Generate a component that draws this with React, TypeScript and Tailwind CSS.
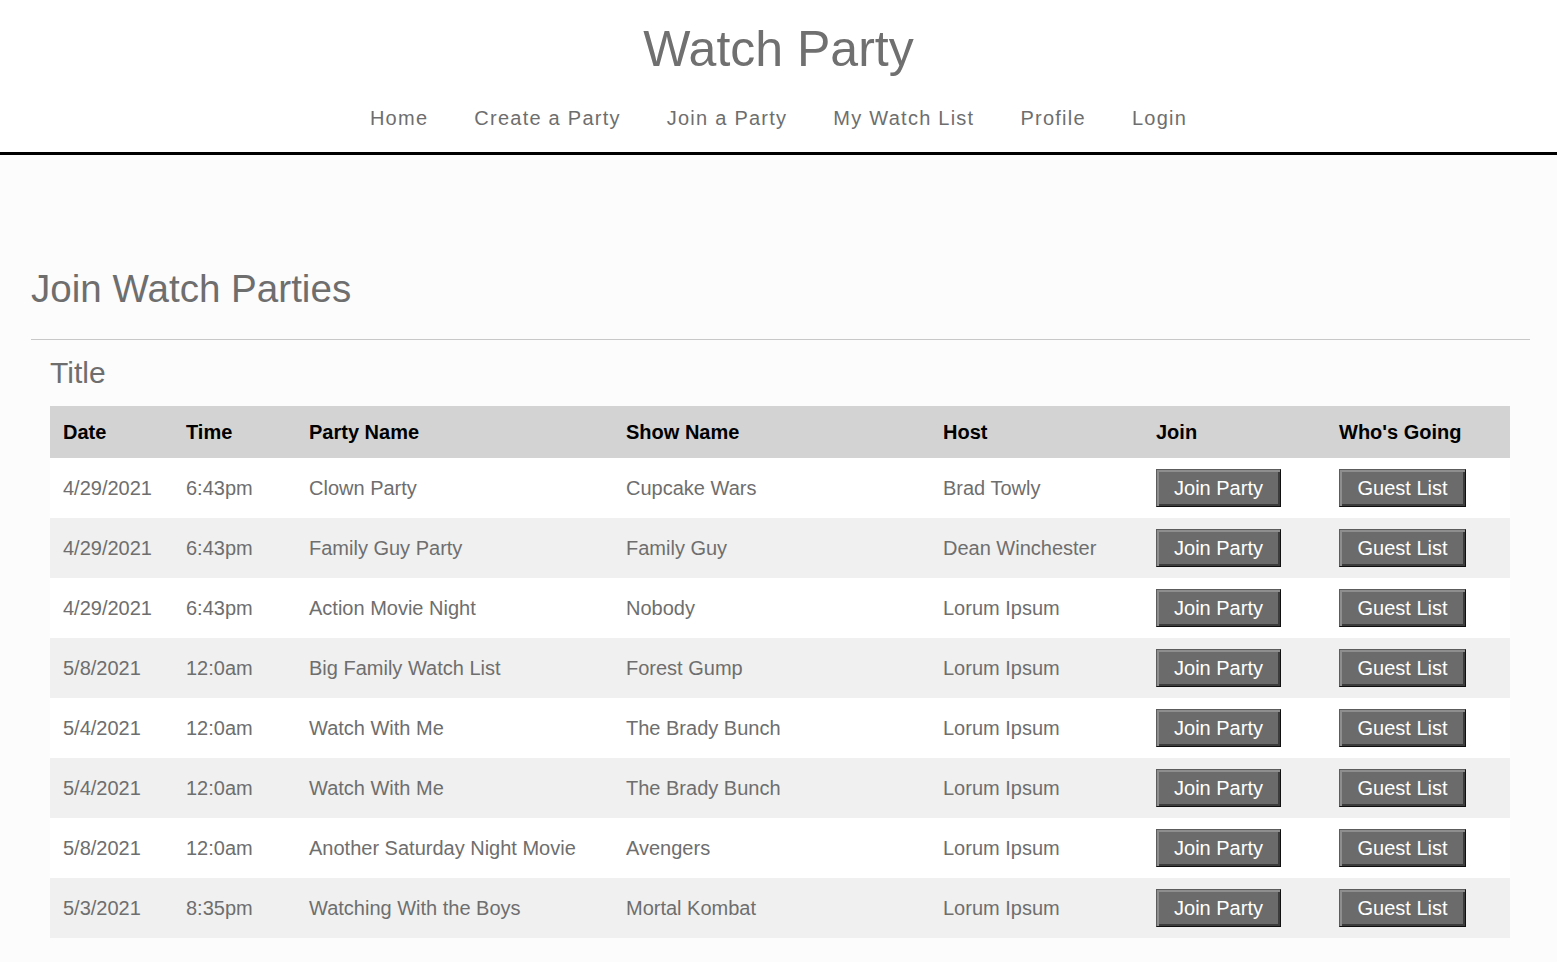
import React from "react";

const parties = [
  { date: "4/29/2021", time: "6:43pm", name: "Clown Party", show: "Cupcake Wars", host: "Brad Towly" },
  { date: "4/29/2021", time: "6:43pm", name: "Family Guy Party", show: "Family Guy", host: "Dean Winchester" },
  { date: "4/29/2021", time: "6:43pm", name: "Action Movie Night", show: "Nobody", host: "Lorum Ipsum" },
  { date: "5/8/2021", time: "12:0am", name: "Big Family Watch List", show: "Forest Gump", host: "Lorum Ipsum" },
  { date: "5/4/2021", time: "12:0am", name: "Watch With Me", show: "The Brady Bunch", host: "Lorum Ipsum" },
  { date: "5/4/2021", time: "12:0am", name: "Watch With Me", show: "The Brady Bunch", host: "Lorum Ipsum" },
  { date: "5/8/2021", time: "12:0am", name: "Another Saturday Night Movie", show: "Avengers", host: "Lorum Ipsum" },
  { date: "5/3/2021", time: "8:35pm", name: "Watching With the Boys", show: "Mortal Kombat", host: "Lorum Ipsum" },
];

const navLinks = ["Home", "Create a Party", "Join a Party", "My Watch List", "Profile", "Login"];

function BevelButton({ label, width }: { label: string; width: string }) {
  return (
    <button
      className={`${width} h-[38px] bg-[#6b6b6b] text-white text-[20px] leading-none border border-t-[#5c5c5c] border-l-[#5c5c5c] border-b-[#111] border-r-[#111] shadow-[inset_2px_2px_0_#8e8e8e,inset_-2px_-2px_0_#3c3c3c]`}
    >
      {label}
    </button>
  );
}

export default function App() {
  return (
    <div className="min-h-screen bg-[#fcfcfc] font-['Liberation_Sans',Arial,sans-serif]">
      <header className="bg-white border-b-[3px] border-black pt-[21px] pb-[20px]">
        <h1 className="text-center text-[50px] leading-[56px] text-[#707070]">Watch Party</h1>
        <nav className="mt-[27px] flex justify-center">
          {navLinks.map((link) => (
            <a
              key={link}
              href="#"
              className="px-[23px] text-[20px] leading-[28px] tracking-[1.25px] text-[#6e6e6e]"
            >
              {link}
            </a>
          ))}
        </nav>
      </header>

      <main className="pl-[31px] pr-[27px] pt-[112px] pb-[22px]">
        <h2 className="text-[38.6px] leading-[44px] text-[#6e6e6e]">Join Watch Parties</h2>
        <hr className="mt-[28px] border-0 border-t border-[#c8c8c8]" />

        <section className="px-[19px] pt-[15px]">
          <h3 className="text-[30px] leading-[35px] text-[#6e6e6e]">Title</h3>
          <table className="mt-[16px] w-[1460px] table-fixed border-collapse text-[20px] text-left">
            <colgroup>
              <col className="w-[123px]" />
              <col className="w-[123px]" />
              <col className="w-[317px]" />
              <col className="w-[317px]" />
              <col className="w-[213px]" />
              <col className="w-[183px]" />
              <col className="w-[184px]" />
            </colgroup>
            <thead>
              <tr className="bg-[#d3d3d3] h-[52px]">
                {["Date", "Time", "Party Name", "Show Name", "Host", "Join", "Who's Going"].map((h) => (
                  <th key={h} className="pl-[13px] font-bold text-black">
                    {h}
                  </th>
                ))}
              </tr>
            </thead>
            <tbody>
              {parties.map((p, i) => (
                <tr key={i} className={`h-[60px] ${i % 2 === 0 ? "bg-white" : "bg-[#f0f0f0]"} text-[#6e6e6e]`}>
                  <td className="pl-[13px]">{p.date}</td>
                  <td className="pl-[13px]">{p.time}</td>
                  <td className="pl-[13px]">{p.name}</td>
                  <td className="pl-[13px]">{p.show}</td>
                  <td className="pl-[13px]">{p.host}</td>
                  <td className="pl-[13px]">
                    <BevelButton label="Join Party" width="w-[125px]" />
                  </td>
                  <td className="pl-[13px]">
                    <BevelButton label="Guest List" width="w-[127px]" />
                  </td>
                </tr>
              ))}
            </tbody>
          </table>
        </section>
      </main>
    </div>
  );
}
